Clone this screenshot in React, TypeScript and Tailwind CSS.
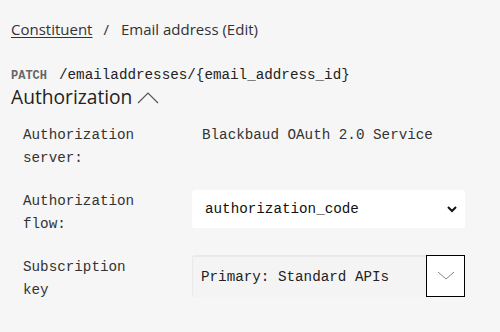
import React from "react";

const mono = { fontFamily: '"Liberation Mono", "DejaVu Sans Mono", monospace' };

export default function App() {
  return (
    <div className="w-[500px] h-[332px] bg-[#f6f6f6] text-[#333] overflow-hidden" style={{ fontFamily: '"Open Sans", "Noto Sans", sans-serif' }}>
      <div className="pl-[11px] pt-[18px] text-[15px] leading-[22px] flex items-center">
        <span className="underline underline-offset-2">Constituent</span>
        <span className="ml-[11px] mr-[12px]">/</span>
        <span>Email address (Edit)</span>
      </div>
      <div className="pl-[11px] mt-[25px] flex items-baseline leading-[20px]" style={mono}>
        <span className="text-[12px] font-bold text-[#666] mr-[12px]">PATCH</span>
        <span className="text-[14.25px] text-[#222]">/emailaddresses/&#123;email_address_id&#125;</span>
      </div>
      <div className="pl-[11px] flex items-center leading-[26px] mt-[-2px]">
        <span className="text-[19.2px] text-[#222]">Authorization</span>
        <svg width="22" height="12" viewBox="0 0 22 12" className="ml-[5px] mt-[2px]">
          <path d="M1 11 L11 1 L21 11" fill="none" stroke="#555" strokeWidth="1.2" />
        </svg>
      </div>
      <div className="pl-[23px] pr-[35px] mt-[14px] text-[14.25px] leading-[23px]" style={mono}>
        <div className="flex">
          <div className="w-[169px]">Authorization<br />server:</div>
          <div className="pl-[10px]">Blackbaud OAuth 2.0 Service</div>
        </div>
        <div className="flex mt-[20px]">
          <div className="w-[169px]">Authorization<br />flow:</div>
          <div className="flex-1 h-[38px] bg-white rounded-[3px] flex items-center justify-between pl-[13px] pr-[8px]">
            <span className="text-[#111]">authorization_code</span>
            <svg width="10" height="7" viewBox="0 0 10 7">
              <path d="M1 1 L5 5 L9 1" fill="none" stroke="#111" strokeWidth="2" />
            </svg>
          </div>
        </div>
        <div className="flex mt-[20px]">
          <div className="w-[169px]">Subscription<br />key</div>
          <div className="flex-1 mt-[-1px] h-[42px] flex">
            <div className="flex-1 bg-[#f4f4f4] border-t-2 border-l border-[#e9e9e9] rounded-l-[3px] flex items-center pl-[8px] text-[#222]">
              Primary: Standard APIs
            </div>
            <div className="w-[39px] h-[42px] border border-black bg-white flex items-center justify-center">
              <svg width="18" height="10" viewBox="0 0 18 10">
                <path d="M1 1 L9 8 L17 1" fill="none" stroke="#888" strokeWidth="1" />
              </svg>
            </div>
          </div>
        </div>
      </div>
    </div>
  );
}
